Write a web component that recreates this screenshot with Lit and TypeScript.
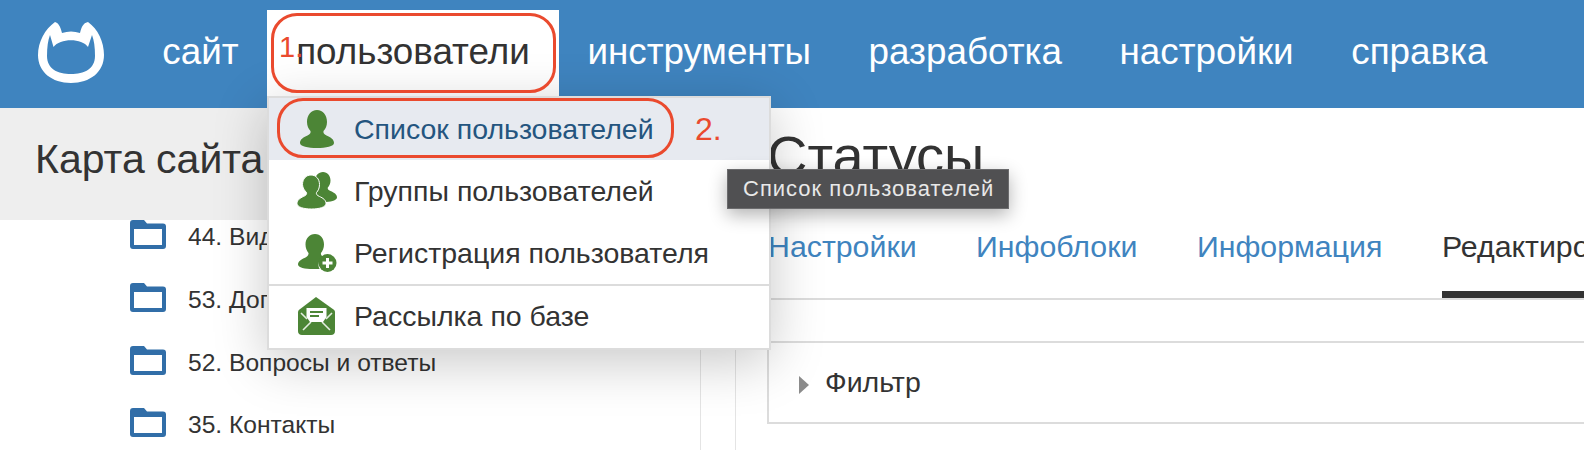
import { LitElement, html, css } from "lit";
import { customElement } from "lit/decorators.js";

const person = html`<svg class="ico" viewBox="0 0 40 38"><path d="M20 0c6 0 10 5 10 12 0 4-1.500 7-3.500 9-.5 2 .5 3 3 4.500C34 27.500 37 29.500 37 33c0 3.500-8 5-17 5S3 36.500 3 33c0-3.500 3-5.500 7.500-7.500 2.500-1.500 3.500-2.500 3-4.500C11.500 19 10 16 10 12 10 5 14 0 20 0z"/></svg>`;
const group = html`<svg class="ico" viewBox="0 0 40 38"><path d="M26 0c4.500 0 7.500 3.700 7.500 8.500 0 3-1.200 5.500-2.700 7-.4 1.600.4 2.400 2.700 3.500 3.500 1.600 6.500 3.300 6.500 6.300 0 2.700-4 4.300-11 4.700H18V8.500C18 3.700 21.500 0 26 0z"/><path stroke="#fff" stroke-width="1" d="M14 3c5 0 8.500 4 8.500 9.500 0 3.500-1.300 6.300-3 8-.4 1.800.4 2.800 3 4 3.500 1.600 6.500 3.500 6.500 7 0 3.800-7 5.500-14.500 5.500S0 35.300 0 31.500c0-3.500 3-5.400 6.500-7 2.600-1.200 3.400-2.200 3-4-1.700-1.700-4-4.500-4-8C5.500 7 9 3 14 3z"/></svg>`;
const addUser = html`<svg class="ico" viewBox="0 0 40 38"><path d="M18 0c5.500 0 9 4.500 9 10.500 0 3.500-1.300 6.500-3 8.500-.4 1.800.4 2.800 2.500 3.800-3 1.500-5 4.500-5 8 0 1.700.4 3.200 1.200 4.200H16C8 35 1 33.700 1 30.500c0-3 3-4.900 6.500-6.500 2.600-1.200 4.400-2.900 4-5-1.700-2-3-5-3-8.500C8.500 4.500 12.500 0 18 0z"/><circle cx="30.500" cy="29" r="9"/><path d="M30.500 24v10M25.500 29h10" stroke="#fff" stroke-width="3" fill="none"/></svg>`;
const mail = html`<svg class="ico" viewBox="0 0 40 38"><path d="M19 0l17.500 12.500c1 .8 1.500 1.500 1.500 3V34c0 2.500-1.500 4-4 4H5c-2.500 0-4-1.500-4-4V15.500c0-1.500.5-2.200 1.500-3L19 0z"/><path d="M9.500 11h20v9l-3.500 5H13l-3.500-5z" fill="#fff"/><path d="M13 15h13M13 19h9" stroke="#4c8536" stroke-width="2" fill="none"/><path d="M4 16l6 6M35 16l-6 6M6 33l8-8M33 33l-8-8" stroke="#fff" stroke-width="1.600" fill="none" opacity=".85"/></svg>`;
const folder = html`<svg class="folder" viewBox="0 0 36 29"><path fill="#316ea8" fill-rule="evenodd" d="M0 3q0-3 3-3h11l3 3.500h16q3 0 3 3V26q0 3-3 3H3q-3 0-3-3zM4 9v16h28V9z"/></svg>`;

@customElement("app-root")
export class AppRoot extends LitElement {
  static styles = css`
    :host { display: block; position: relative; width: 1584px; height: 450px; overflow: hidden; background: #fff; font-family: "Liberation Sans", Arial, sans-serif; color: #333; }
    .top { display: flex; align-items: flex-start; height: 108px; background: #3f84bf; box-sizing: border-box; padding-left: 38px; }
    .logo { width: 66px; height: 62px; margin-top: 22px; margin-right: 29.500px; flex: none; }
    .nav { display: flex; margin-top: 10px; }
    .nav span { height: 86px; line-height: 84px; padding: 0 28.800px; font-size: 36.800px; color: #fff; white-space: nowrap; box-sizing: border-box; }
    .nav span.on { background: #fff; color: #333; }
    .body { display: flex; height: 342px; }
    .side { width: 701px; flex: none; border-right: 1px solid #e4e4e4; box-sizing: border-box; }
    .title { height: 112px; background: #eeeeee; padding-left: 35px; font-size: 41px; line-height: 102px; box-sizing: border-box; white-space: nowrap; }
    .tree { list-style: none; margin: 0; padding: 0 0 0 130px; }
    .tree li { display: flex; align-items: flex-start; height: 62.800px; font-size: 24.600px; line-height: 34px; white-space: nowrap; }
    .folder { width: 36px; height: 29px; flex: none; margin-right: 22px; }
    .split { width: 34px; flex: none; border-right: 1px solid #e4e4e4; }
    .main { flex: 1; min-width: 0; padding-left: 31px; overflow: hidden; }
    h1 { margin: 0; font-weight: 400; font-size: 56px; line-height: 60px; padding-top: 18px; height: 78px; box-sizing: border-box; white-space: nowrap; }
    .tabs { display: flex; height: 114px; gap: 59.500px; border-bottom: 2px solid #dcdcdc; box-sizing: border-box; padding-left: 1px; }
    .tabs span { font-size: 30.300px; color: #3f84bf; line-height: 36px; padding-top: 43px; white-space: nowrap; box-sizing: border-box; }
    .tabs span.on { color: #333; border-bottom: 7px solid #333; }
    .filter { margin-top: 41px; height: 83px; border: 2px solid #dcdcdc; border-right: 0; display: flex; align-items: center; padding-left: 30px; font-size: 28.500px; box-sizing: border-box; }
    .arrow { width: 0; height: 0; border-left: 10px solid #8c8c8c; border-top: 9px solid transparent; border-bottom: 9px solid transparent; margin-right: 16px; margin-top: 4px; }
    .menu { position: absolute; left: 267px; top: 96px; width: 504px; height: 254px; box-sizing: border-box; background: #fff; border: 2px solid #dcdcdc; box-shadow: 0 12px 50px rgba(0,0,0,.22); }
    .menu div { display: flex; align-items: center; height: 62px; font-size: 28.500px; white-space: nowrap; }
    .menu div.sep { border-top: 2px solid #dcdcdc; height: 64px; padding-bottom: 2px; box-sizing: border-box; }
    .menu div.hi { background: #e7eaf0; color: #24557f; }
    .ico { width: 40px; height: 38px; margin-left: 28px; margin-right: 17px; flex: none; fill: #4c8536; }
    .tip { position: absolute; left: 727px; top: 169px; width: 282px; height: 40px; box-sizing: border-box; background: #505052; border: 1px solid #6b6b6d; color: #e8e8e8; font-size: 22px; letter-spacing: 1px; line-height: 37px; padding-left: 15px; white-space: nowrap; box-shadow: 0 6px 18px rgba(0,0,0,.3); }
    .ring { position: absolute; border: 3px solid #ea4a2e; box-sizing: border-box; border-radius: 26px; }
    .r1 { left: 271px; top: 13px; width: 285px; height: 80px; }
    .r2 { left: 277px; top: 98px; width: 397px; height: 60px; }
    .note { position: absolute; color: #ea4a2e; font-weight: 400; white-space: nowrap; line-height: 1; }
    .n1 { left: 279px; top: 33px; font-size: 29px; }
    .n2 { left: 695px; top: 113px; font-size: 32px; }
  `;

  render() {
    return html`
      <div class="top">
        <svg class="logo" viewBox="0 0 66 62">
          <path fill="#fff" fill-rule="evenodd" d="M17 0C20 1 22 3 24 11C30 9 36 9 42 11C44 3 46 1 50 0C60 7 66 20 66 33C66 50 52 61 33 61C14 61 0 50 0 33C0 20 7 7 17 0zM12 13L15.500 25C22 16 44 16 50 25L54 13C56 18 57 25 57 34C57 47 46 52 33 52C20 52 9 47 9 34C9 25 10 18 12 13z"/>
        </svg>
        <nav class="nav">
          <span>сайт</span><span class="on">пользователи</span><span>инструменты</span><span>разработка</span><span>настройки</span><span>справка</span>
        </nav>
      </div>
      <div class="body">
        <aside class="side">
          <div class="title">Карта сайта</div>
          <ul class="tree">
            <li>${folder}<span>44. Видео</span></li>
            <li>${folder}<span>53. Договоры</span></li>
            <li>${folder}<span>52. Вопросы и ответы</span></li>
            <li>${folder}<span>35. Контакты</span></li>
          </ul>
        </aside>
        <div class="split"></div>
        <main class="main">
          <h1>Статусы</h1>
          <div class="tabs"><span>Настройки</span><span>Инфоблоки</span><span>Информация</span><span class="on">Редактирование</span></div>
          <div class="filter"><i class="arrow"></i>Фильтр</div>
        </main>
      </div>
      <div class="menu">
        <div class="hi">${person}Список пользователей</div>
        <div>${group}Группы пользователей</div>
        <div>${addUser}Регистрация пользователя</div>
        <div class="sep">${mail}Рассылка по базе</div>
      </div>
      <div class="tip">Список пользователей</div>
      <div class="ring r1"></div>
      <div class="ring r2"></div>
      <div class="note n1">1.</div>
      <div class="note n2">2.</div>
    `;
  }
}
